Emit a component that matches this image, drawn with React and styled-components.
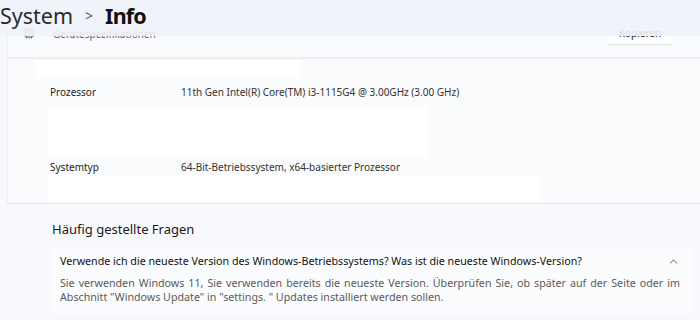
import React from "react";
import styled, { createGlobalStyle } from "styled-components";
import { ChevronUp, Cpu } from "lucide-react";

const GlobalStyle = createGlobalStyle`
  html, body {
    margin: 0;
    padding: 0;
    background: #f8f9fc;
    font-family: "Segoe UI", "Noto Sans", "Open Sans", sans-serif;
    color: #1b1b1b;
    overflow: hidden;
  }
`;

const Page = styled.div`
  width: 700px;
  height: 320px;
  display: flex;
  flex-direction: column;
`;

const Header = styled.header`
  position: relative;
  z-index: 2;
  height: 36px;
  margin-bottom: -24px;
  display: flex;
  align-items: center;
  gap: 10px;
  background: rgba(238, 242, 249, 0.9);
  font-size: 21.5px;
  line-height: 1;
  padding-bottom: 5px;
  box-sizing: border-box;
`;

const Crumb = styled.span`
  font-weight: ${(p) => (p.current ? 700 : 400)};
  letter-spacing: ${(p) => (p.current ? "-0.8px" : "0")};
  color: ${(p) => (p.current ? "#111" : "#2a2a2a")};
`;

const Sep = styled.span`
  font-size: 14px;
  color: #555;
  padding: 0 2px;
`;

const Card = styled.section`
  margin-left: 7px;
  background: #fafbfd;
  border-left: 1px solid #eceef2;
  border-bottom: 1px solid #e6e8ec;
`;

const CardTop = styled.div`
  height: 47px;
  box-sizing: border-box;
  display: flex;
  align-items: flex-start;
  padding: 10px 27px 0 15px;
  gap: 18px;
  border-bottom: 2px solid #eceef2;
  color: #666;
  font-size: 10px;
  line-height: 12px;
`;

const CardLabel = styled.span`
  margin-top: 6px;
`;

const Spacer = styled.div`
  flex: 1;
`;

const CopyButton = styled.button`
  width: 66px;
  height: 22px;
  border: none;
  border-radius: 3px;
  background: #fff;
  box-shadow: 0 1px 1px rgba(0, 0, 0, 0.12);
  font: inherit;
  font-size: 10px;
  color: #222;
  padding: 0;
`;

const Blank = styled.div`
  margin-top: ${(p) => p.top || 0}px;
  margin-left: ${(p) => p.left}px;
  width: ${(p) => p.w}px;
  height: ${(p) => p.h}px;
  background: #ffffff;
`;

const SpecRow = styled.div`
  height: ${(p) => p.h || 28}px;
  display: grid;
  grid-template-columns: 131px 1fr;
  align-items: center;
  padding-left: 42px;
  font-size: 10px;
  color: #1e1e1e;
`;

const SpecValue = styled.span`
  color: #333;
`;

const Faq = styled.section`
  padding: 15px 8px 0 52px;
`;

const FaqTitle = styled.h2`
  margin: 0 0 8px;
  font-size: 13px;
  font-weight: 400;
  color: #1a1a1a;
  line-height: 20px;
`;

const FaqItem = styled.div`
  background: #fbfcfe;
  border-radius: 4px;
  padding: 5px 12px 10px 8px;
`;

const FaqQuestion = styled.div`
  display: flex;
  align-items: center;
  justify-content: space-between;
  height: 18px;
  font-size: 10.7px;
  color: #111;
`;

const FaqAnswer = styled.p`
  margin: 6px 0 0;
  font-size: 10.7px;
  line-height: 14px;
  color: #5a5a5a;
  text-align: justify;
`;

export default function App() {
  return (
    <Page>
      <GlobalStyle />
      <Header>
        <Crumb>System</Crumb>
        <Sep>&gt;</Sep>
        <Crumb current>Info</Crumb>
      </Header>
      <Card>
        <CardTop>
          <Cpu size={12} strokeWidth={1.6} color="#444" style={{ marginTop: 5 }} />
          <CardLabel>Gerätespezifikationen</CardLabel>
          <Spacer />
          <CopyButton>Kopieren</CopyButton>
        </CardTop>
        <Blank top={1} left={28} w={265} h={18} />
        <SpecRow>
          <span>Prozessor</span>
          <SpecValue>11th Gen Intel(R) Core(TM) i3-1115G4 @ 3.00GHz (3.00 GHz)</SpecValue>
        </SpecRow>
        <Blank left={40} w={381} h={52} />
        <SpecRow h={17}>
          <span>Systemtyp</span>
          <SpecValue>64-Bit-Betriebssystem, x64-basierter Prozessor</SpecValue>
        </SpecRow>
        <Blank left={40} w={493} h={28} />
      </Card>
      <Faq>
        <FaqTitle>Häufig gestellte Fragen</FaqTitle>
        <FaqItem>
          <FaqQuestion>
            <span>Verwende ich die neueste Version des Windows-Betriebssystems? Was ist die neueste Windows-Version?</span>
            <ChevronUp size={13} strokeWidth={1.5} color="#333" />
          </FaqQuestion>
          <FaqAnswer>
            Sie verwenden Windows 11, Sie verwenden bereits die neueste Version. Überprüfen Sie, ob später auf der Seite oder im Abschnitt "Windows Update" in "settings. " Updates installiert werden sollen.
          </FaqAnswer>
        </FaqItem>
      </Faq>
    </Page>
  );
}
